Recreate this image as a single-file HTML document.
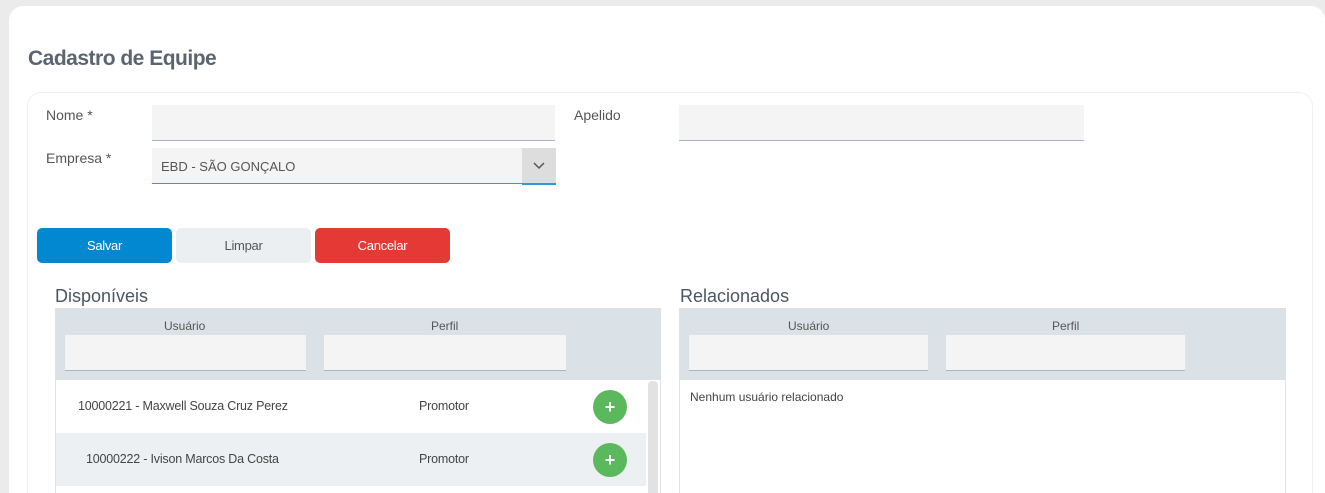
<!DOCTYPE html>
<html style="width:1325px;height:493px;overflow:hidden"><head><meta charset="utf-8"><style>
*{box-sizing:border-box;margin:0;padding:0}
body{width:1325px;height:493px;background:#ebebeb;font-family:"Liberation Sans",sans-serif;position:relative;overflow:hidden;color:#555}
.abs{position:absolute}
.card{left:9px;top:6px;width:1316px;height:487px;background:#fff;border-radius:14px 14px 0 0}
.inner{left:27px;top:92px;width:1286px;height:401px;background:#fff;border:1px solid #eef0f2;border-bottom:none;border-radius:14px 14px 0 0}
.lbl{font-size:14px;color:#555}
.inp{background:#f4f4f4;border-bottom:1px solid #a9b5c0}
.btn{height:35px;border-radius:5px;font-size:13px;display:flex;align-items:center;justify-content:center;letter-spacing:-0.3px}
.hd{font-size:18px;color:#4b5660}
.th{font-size:12px;color:#555}
.cell{font-size:12.5px;color:#444;letter-spacing:-0.2px}
.plus{width:34px;height:34px;border-radius:50%;background:#5cb85c;color:#fff;font-weight:bold;font-size:18px;display:flex;align-items:center;justify-content:center}
</style></head><body>
<div class="abs card"></div>
<div class="abs" style="left:28px;top:47px;font-size:21px;font-weight:bold;color:#5a6570;letter-spacing:-0.5px">Cadastro de Equipe</div>
<div class="abs inner"></div>
<div class="abs lbl" style="left:46px;top:107px">Nome *</div>
<div class="abs inp" style="left:152px;top:105px;width:403px;height:36px"></div>
<div class="abs lbl" style="left:574px;top:107px">Apelido</div>
<div class="abs inp" style="left:679px;top:105px;width:405px;height:36px"></div>
<div class="abs lbl" style="left:46px;top:150px">Empresa *</div>
<div class="abs inp" style="left:152px;top:148px;width:403px;height:36px;border-bottom:1px solid #2a9be0"></div>
<div class="abs" style="left:161px;top:159px;font-size:13px;color:#555">EBD - SÃO GONÇALO</div>
<div class="abs" style="left:522px;top:148px;width:34px;height:37px;background:#ddd;border-bottom:2px solid #2a9be0"></div>
<svg class="abs" style="left:533px;top:162px" width="12" height="8"><path d="M1 1 L6 6 L11 1" stroke="#555" stroke-width="1.5" fill="none"/></svg>
<div class="abs btn" style="left:37px;top:228px;width:135px;background:#0288d1;color:#fff">Salvar</div>
<div class="abs btn" style="left:176px;top:228px;width:135px;background:#eceff1;color:#555">Limpar</div>
<div class="abs btn" style="left:315px;top:228px;width:135px;background:#e53935;color:#fff">Cancelar</div>

<div class="abs hd" style="left:55px;top:286px">Disponíveis</div>
<div class="abs" style="left:55px;top:308px;width:606px;height:185px;border:1px solid #dde3e8;border-bottom:none"></div>
<div class="abs" style="left:55px;top:308px;width:606px;height:72px;background:#dae1e7"></div>
<div class="abs th" style="left:164px;top:319px">Usuário</div>
<div class="abs th" style="left:431px;top:319px">Perfil</div>
<div class="abs inp" style="left:65px;top:335px;width:241px;height:36px"></div>
<div class="abs inp" style="left:324px;top:335px;width:242px;height:36px"></div>
<div class="abs" style="left:56px;top:433px;width:590px;height:53px;background:#edf0f3"></div>
<div class="abs" style="left:648px;top:381px;width:10px;height:112px;background:#e2e2e2;border-radius:4px 4px 0 0"></div>
<div class="abs cell" style="left:78px;top:399px">10000221 - Maxwell Souza Cruz Perez</div>
<div class="abs cell" style="left:419px;top:399px">Promotor</div>
<div class="abs plus" style="left:593px;top:390px">+</div>
<div class="abs cell" style="left:86px;top:452px">10000222 - Ivison Marcos Da Costa</div>
<div class="abs cell" style="left:419px;top:452px">Promotor</div>
<div class="abs plus" style="left:593px;top:443px">+</div>

<div class="abs hd" style="left:680px;top:286px">Relacionados</div>
<div class="abs" style="left:679px;top:308px;width:607px;height:185px;border:1px solid #dde3e8;border-bottom:none"></div>
<div class="abs" style="left:679px;top:308px;width:607px;height:72px;background:#dae1e7"></div>
<div class="abs th" style="left:788px;top:319px">Usuário</div>
<div class="abs th" style="left:1052px;top:319px">Perfil</div>
<div class="abs inp" style="left:689px;top:335px;width:239px;height:36px"></div>
<div class="abs inp" style="left:946px;top:335px;width:239px;height:36px"></div>
<div class="abs" style="left:690px;top:390px;font-size:12px;color:#444">Nenhum usuário relacionado</div>
</body></html>
